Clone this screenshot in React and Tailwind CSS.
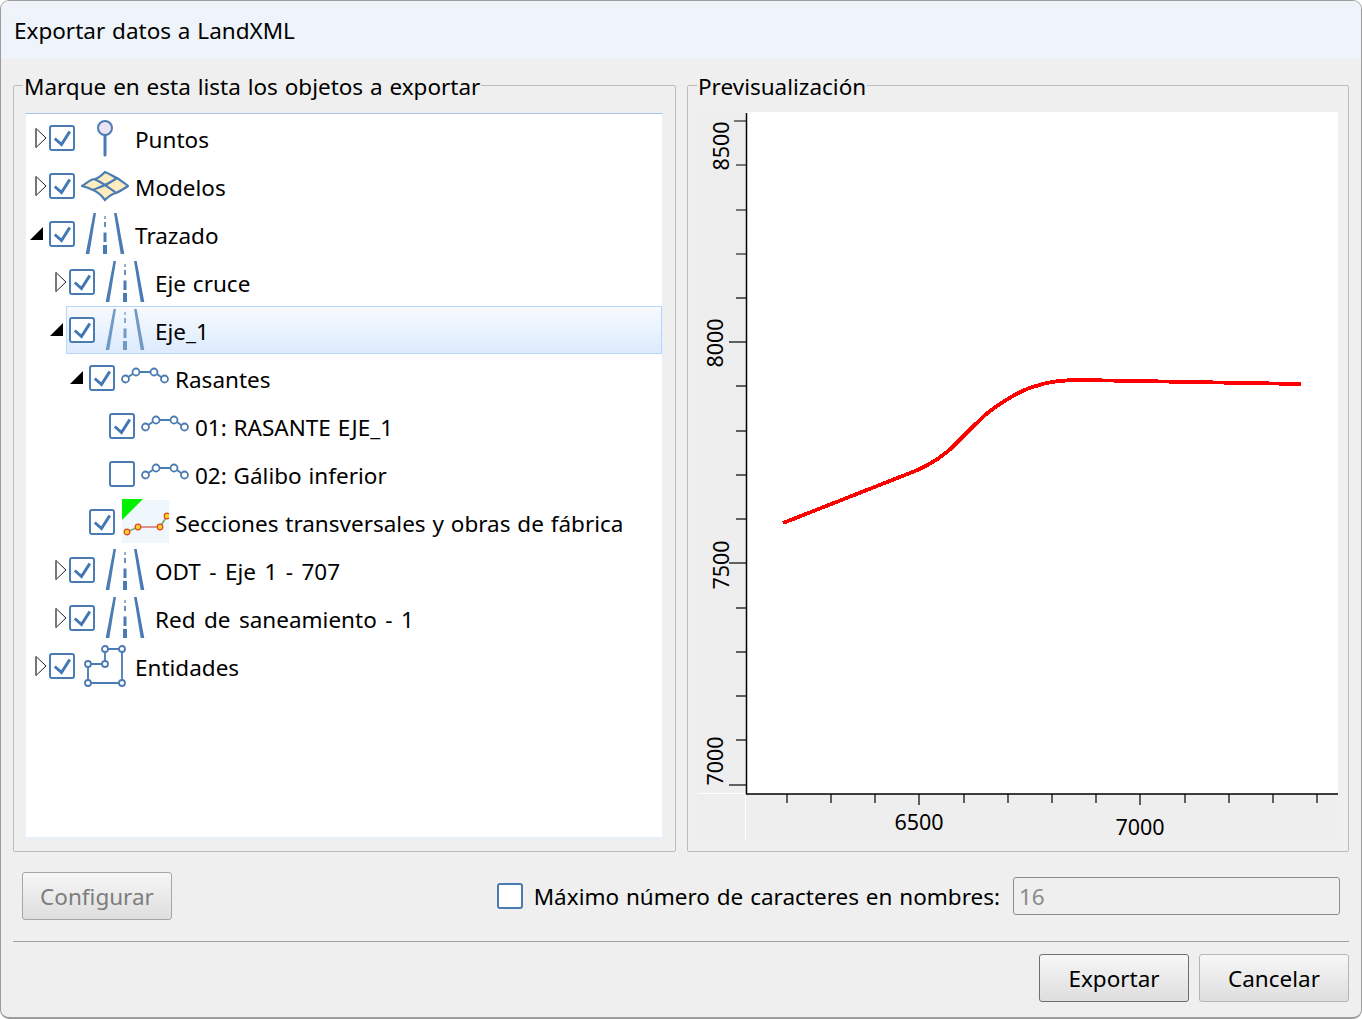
// App.jsx
import React from 'react';

const ROW_ITEMS = [
  { level: 0, label: 'Puntos', icon: 'pin', expander: 'closed', checked: true },
  { level: 0, label: 'Modelos', icon: 'model', expander: 'closed', checked: true },
  { level: 0, label: 'Trazado', icon: 'road', expander: 'open', checked: true },
  { level: 1, label: 'Eje cruce', icon: 'road', expander: 'closed', checked: true },
  { level: 1, label: 'Eje_1', icon: 'road', expander: 'open', checked: true, selected: true },
  { level: 2, label: 'Rasantes', icon: 'grade', expander: 'open', checked: true },
  { level: 3, label: '01: RASANTE EJE_1', icon: 'grade', checked: true },
  { level: 3, label: '02: Gálibo inferior', icon: 'grade', checked: false },
  { level: 2, label: 'Secciones transversales y obras de fábrica', icon: 'section', checked: true },
  { level: 1, label: 'ODT - Eje 1 - 707', icon: 'road', expander: 'closed', checked: true, wide: true },
  { level: 1, label: 'Red de saneamiento - 1', icon: 'road', expander: 'closed', checked: true, wide: true },
  { level: 0, label: 'Entidades', icon: 'entity', expander: 'closed', checked: true },
];

const Y_TICKS = [121, 165, 210, 254, 298, 342, 386, 431, 475, 519, 563, 608, 652, 696, 740, 785];
const X_TICKS = [787, 831, 875, 919, 964, 1008, 1052, 1096, 1140, 1185, 1229, 1273, 1317];
const CURVE = 'M783 523 L905 475 C925 468 937 460 947 452 C960 441 975 423 990 411 C1005 400 1020 390 1036 386 C1050 381 1065 380 1080 380 L1301 384';

function Checkbox({ checked }) {
  return (
    <span className="flex h-[26px] w-[26px] shrink-0 items-center justify-center rounded-[3px] border-[2.5px] border-[#4a7cb3] bg-white">
      {checked && (
        <svg width="21" height="21" viewBox="0 0 21 21" fill="none">
          <path d="M2.8 10.5 L9.5 16.5 L17.8 3.5" stroke="#4177b5" strokeWidth="3" />
        </svg>
      )}
    </span>
  );
}

function Expander({ type }) {
  if (type === 'open') {
    return (
      <svg width="14" height="14" viewBox="0 0 14 14" className="ml-[4px]">
        <path d="M0 13 L13 0 V13 Z" fill="#000" />
      </svg>
    );
  }
  if (type === 'closed') {
    return (
      <svg width="12" height="20" viewBox="0 0 12 20" className="ml-[9px] shrink-0">
        <path d="M1 0.5 L11 10 L1 19.5 Z" fill="#fff" stroke="#222" strokeWidth="1" />
        <path d="M1 0.5 V19.5" stroke="#777" strokeWidth="2" />
      </svg>
    );
  }
  return null;
}

function RoadIcon() {
  return (
    <svg width="48" height="48" viewBox="0 -2 48 48" fill="#4a7cb3">
      <path d="M12.5 1 H15 L8.3 42 H4.7 Z" />
      <path d="M33 1 H35.7 L43.3 42 H39.7 Z" />
      <rect x="23" y="4" width="2" height="3" opacity="0.6" />
      <rect x="23" y="10" width="2" height="5" opacity="0.85" />
      <rect x="22.5" y="20.5" width="3" height="9.5" />
      <rect x="22" y="33" width="4" height="9" />
    </svg>
  );
}

function PinIcon() {
  return (
    <svg width="48" height="48" viewBox="0 -2 48 48" fill="none">
      <path d="M24 19 V39" stroke="#4a7cb3" strokeWidth="3" strokeLinecap="round" />
      <circle cx="24" cy="12" r="7" fill="#ece2f6" stroke="#4a7cb3" strokeWidth="2" />
    </svg>
  );
}

function ModelIcon() {
  return (
    <svg width="48" height="48" viewBox="0 -2 48 48" fill="none" stroke="#4a7cb3" strokeWidth="2.2">
      <path
        d="M1 22 C6 19 9 15 14 15 C18 14 21 11 24 8 C29 10 33 13 36 14 C40 17 44 19 47 22 C43 25 39 27 35 29 C30 30 27 33 24 36 C21 32 17 28 12 26 C8 24 5 23 1 22 Z"
        fill="#fcecc0"
      />
      <path d="M13 15 C18 17 21 19 24 21 C28 24 32 26 35 29" />
      <path d="M36 14 C32 17 28 19 24 21 C20 23 16 24 12 26" />
    </svg>
  );
}

function GradeIcon() {
  return (
    <svg width="48" height="48" viewBox="0 -2 48 48" fill="#fff" stroke="#4a7cb3" strokeWidth="1.8">
      <path d="M4 23 L15 16 H33 L43 23" fill="none" />
      <circle cx="4.5" cy="23" r="3.5" />
      <circle cx="15" cy="16" r="3.5" />
      <circle cx="33" cy="16" r="3.5" />
      <circle cx="43.5" cy="23" r="3.5" />
    </svg>
  );
}

function SectionIcon() {
  return (
    <svg width="48" height="48" viewBox="0 -2 48 48">
      <rect x="1" y="0" width="47" height="43" fill="#eff7fd" />
      <path d="M1 -1 H22 L1 20 Z" fill="#00f000" />
      <path d="M17 27 H39" fill="none" stroke="#d98a80" strokeWidth="1.8" />
      <path d="M6 32 L17 27 M39 27 L46 16" fill="none" stroke="#77b277" strokeWidth="1.8" />
      {[[6, 32], [17, 27], [39, 27], [46, 16]].map(([cx, cy]) => (
        <circle key={cx} cx={cx} cy={cy} r="2.8" fill="#ffd21f" stroke="#e0452a" strokeWidth="1.2" />
      ))}
    </svg>
  );
}

function EntityIcon() {
  return (
    <svg width="48" height="48" viewBox="0 -2 48 48" fill="#fff" stroke="#4a7cb3" strokeWidth="1.8">
      <path d="M24 5 H41 V39 H7 V20 H24 Z" fill="none" />
      {[[24, 5], [41, 5], [24, 20], [7, 20], [7, 39], [41, 39]].map(([cx, cy]) => (
        <circle key={`${cx}-${cy}`} cx={cx} cy={cy} r="3" />
      ))}
    </svg>
  );
}

const ICONS = {
  pin: PinIcon,
  model: ModelIcon,
  road: RoadIcon,
  grade: GradeIcon,
  section: SectionIcon,
  entity: EntityIcon,
};

const INDENTS = ['pl-0', 'pl-[20px]', 'pl-[40px]', 'pl-[60px]'];

function TreeRow({ item }) {
  const Icon = ICONS[item.icon];
  return (
    <div className={`flex h-[48px] items-center ${INDENTS[item.level]}`}>
      <div className="flex w-[20px] shrink-0 items-center">
        <Expander type={item.expander} />
      </div>
      <div
        className={`flex h-[48px] flex-1 items-center gap-[6px] border pl-[2px] ${
          item.selected
            ? 'border-[#b8d6fb] bg-gradient-to-b from-[#f7fafe] to-[#dcebfd]'
            : 'border-transparent'
        }`}
      >
        <Checkbox checked={item.checked} />
        <span className={item.selected ? 'opacity-75' : ''}>
          <Icon />
        </span>
        <span className={`whitespace-nowrap pt-[4px] ${item.wide ? '[word-spacing:2.6px]' : ''}`}>{item.label}</span>
      </div>
    </div>
  );
}

function GroupBox({ title, className, children }) {
  return (
    <div className={`relative rounded-[2px] border border-[#bcbcbc] ${className}`}>
      <span className="absolute left-[9px] top-[-15px] h-[31px] bg-[#efefef] px-px leading-[32px]">{title}</span>
      {children}
    </div>
  );
}

function Chart() {
  return (
    <svg className="block" width="640" height="728" viewBox="698 112 640 728">
      <rect x="698" y="112" width="640" height="728" fill="#eeeeee" />
      <rect x="746" y="112" width="592" height="682" fill="#fff" />
      <path d="M698 793.5 H745.5 V840" fill="none" stroke="#fff" />
      <path d="M746.5 113 V794 H1338" fill="none" stroke="#000" strokeWidth="1.5" />
      {Y_TICKS.map((y, i) => (
        <path key={y} d={`M${i === 0 ? 734 : i % 5 === 0 ? 729 : 736} ${y} H746`} stroke="#000" strokeWidth="1.2" />
      ))}
      {X_TICKS.map((x) => (
        <path key={x} d={`M${x} 794 V${x === 919 || x === 1140 ? 805 : 803}`} stroke="#000" strokeWidth="1.2" />
      ))}
      <g fontSize="21.5" fill="#000">
        <text transform="translate(729 146) rotate(-90)" textAnchor="middle">8500</text>
        <text transform="translate(723 343) rotate(-90)" textAnchor="middle">8000</text>
        <text transform="translate(729 565) rotate(-90)" textAnchor="middle">7500</text>
        <text transform="translate(723 761) rotate(-90)" textAnchor="middle">7000</text>
        <text x="919" y="830" textAnchor="middle">6500</text>
        <text x="1140" y="835" textAnchor="middle">7000</text>
      </g>
      <path d={CURVE} fill="none" stroke="#ff0000" strokeWidth="3.8" shapeRendering="crispEdges" />
    </svg>
  );
}

function DialogButton({ children, disabled, primary }) {
  return (
    <button
      className={`h-[48px] w-[150px] rounded-[3px] border bg-gradient-to-b from-[#f7f7f7] to-[#dedede] pt-[2px] ${
        disabled ? 'border-[#a6a6a6] text-[#7d7d7d]' : primary ? 'border-[#6f6f6f]' : 'border-[#b5b5b5]'
      }`}
    >
      {children}
    </button>
  );
}

export default function App() {
  return (
    <div className="flex h-[1019px] w-[1362px] flex-col overflow-hidden rounded-[9px] border border-b-2 border-[#9c9c9c] bg-[#efefef] font-['Noto_Sans','Open_Sans',sans-serif] text-[22.5px] text-black [word-spacing:1px]">
      {/* Title bar */}
      <div className="flex h-[57px] shrink-0 items-center bg-[#eef4f9] pl-[13px] pt-[2px]">Exportar datos a LandXML</div>

      {/* Panels */}
      <div className="flex gap-[11px] px-[12px] pt-[27px]">
        <GroupBox title="Marque en esta lista los objetos a exportar" className="h-[767px] w-[663px] pl-[11px] pr-[12px] pt-[27px]">
          <div className="h-[726px] border-x border-b-2 border-t border-x-[#e6f0fa] border-b-[#e6f0fa] border-t-[#a9c4e0] bg-white">
            {ROW_ITEMS.map((item) => (
              <TreeRow key={item.label} item={item} />
            ))}
          </div>
        </GroupBox>
        <GroupBox title="Previsualización" className="h-[767px] w-[662px] pl-[10px] pt-[26px]">
          <Chart />
        </GroupBox>
      </div>

      {/* Options */}
      <div className="flex items-center justify-between pl-[21px] pr-[21px] pt-[20px]">
        <DialogButton disabled>Configurar</DialogButton>
        <div className="flex items-center">
          <span className="mr-[11px] flex">
            <Checkbox checked={false} />
          </span>
          <span className="mr-[13px] pt-[2px]">Máximo número de caracteres en nombres:</span>
          <div className="flex h-[38px] w-[327px] items-center rounded-[3px] border border-[#8d8d8d] pl-[5px] pt-[2px] text-[#8a8a8a]">16</div>
        </div>
      </div>

      <div className="mx-[12px] mt-[21px] border-t border-[#a3a3a3]" />

      {/* Footer */}
      <div className="flex justify-end gap-[10px] pr-[12px] pt-[12px]">
        <DialogButton primary>Exportar</DialogButton>
        <DialogButton>Cancelar</DialogButton>
      </div>
    </div>
  );
}
